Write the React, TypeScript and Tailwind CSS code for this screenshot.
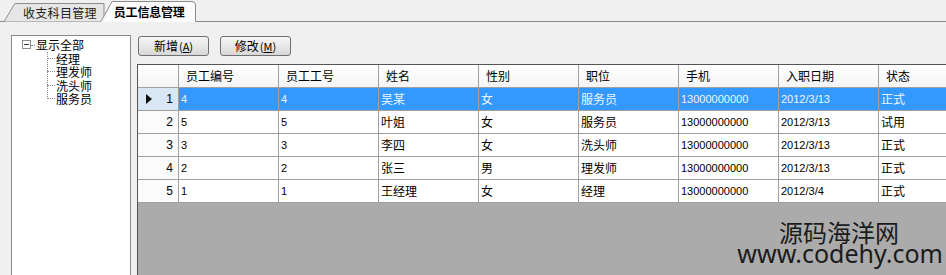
import React from "react";

const cjk = "font-['SimSun','Noto_Sans_CJK_SC',sans-serif]";

const cols = ["员工编号", "员工工号", "姓名", "性别", "职位", "手机", "入职日期", "状态"];
const rows = [
  ["4", "4", "吴某", "女", "服务员", "13000000000", "2012/3/13", "正式"],
  ["5", "5", "叶姐", "女", "服务员", "13000000000", "2012/3/13", "试用"],
  ["3", "3", "李四", "女", "洗头师", "13000000000", "2012/3/13", "正式"],
  ["2", "2", "张三", "男", "理发师", "13000000000", "2012/3/13", "正式"],
  ["1", "1", "王经理", "女", "经理", "13000000000", "2012/3/4", "正式"],
];
const isNum = (i: number) => i === 0 || i === 1 || i === 5 || i === 6;

function Tabs() {
  return (
    <div className="relative h-[22px] w-full">
      <svg className="absolute inset-0" width="946" height="22">
        <line x1="0" y1="21.5" x2="946" y2="21.5" stroke="#8c8c8c" />
        <path d="M4 21.5 L15 3.5 L104 3.5 L104 21.5" fill="#e6e6e6" stroke="#8c8c8c" />
        <path d="M101 21.5 L112 1.5 L192 1.5 Q195.5 1.5 195.5 5 L195.5 21.5" fill="#fbfbfb" stroke="#8c8c8c" />
        <line x1="101.5" y1="21.5" x2="195" y2="21.5" stroke="#fbfbfb" />
      </svg>
      <div className={`relative flex items-center h-[22px] text-[12px] leading-none ${cjk}`}>
        <span className="ml-[23px] pt-[3px] text-[#222] tracking-[0.3px]">收支科目管理</span>
        <span className="ml-[17px] pt-[1px] text-black font-bold tracking-[-0.2px]">员工信息管理</span>
      </div>
    </div>
  );
}

function Tree() {
  const kids = ["经理", "理发师", "洗头师", "服务员"];
  return (
    <div className="ml-[11px] mt-[13px] w-[120px] h-[260px] bg-white border border-[#8a8a8a] relative">
      <div className={`pt-[2px] text-[12px] text-black ${cjk}`}>
        <div className="flex items-center h-[13.5px]">
          <span className="ml-[10px] w-[9px] h-[9px] border border-[#8e8e8e] flex items-center justify-center bg-white">
            <span className="block w-[5px] h-[1px] bg-[#333]" />
          </span>
          <span className="w-[4px] border-t border-dotted border-[#888] mt-[1px]" />
          <span className="ml-[1px] inline-block h-[13px] leading-[13px]">显示全部</span>
        </div>
        <div className="relative">
          {kids.map((k) => (
            <div key={k} className="flex items-center h-[13.5px]">
              <span className="ml-[35px] w-[8px] border-t border-dotted border-[#888]" />
              <span className="ml-[1px] inline-block h-[13px] leading-[13px]">{k}</span>
            </div>
          ))}
          <span className="absolute left-[35px] top-0 h-[47px] border-l border-dotted border-[#888]" />
        </div>
      </div>
    </div>
  );
}

function Btn({ label, k }: { label: string; k: string }) {
  return (
    <button className={`w-[71px] h-[20px] rounded-[3px] border border-[#707070] bg-gradient-to-b from-[#f6f6f6] via-[#e8e8e8] to-[#d8d8d8] text-[12px] leading-none text-black flex items-center justify-center ${cjk}`}>
      {label}
      <span className="text-[11px] ml-[1px]">(<span className="underline">{k}</span>)</span>
    </button>
  );
}

function Grid() {
  return (
    <div className="mt-[8px] h-[220px] border-l border-t border-[#555] bg-[#ababab] overflow-hidden">
      <div className="flex h-[23px] bg-gradient-to-b from-white to-[#f4f4f4] border-b border-[#a0a0a0]">
        <div className="w-[41px] shrink-0 border-r border-[#a0a0a0]" />
        {cols.map((c) => (
          <div key={c} className={`w-[100px] shrink-0 border-r border-[#a0a0a0] pl-[7px] flex items-center text-[12px] text-black ${cjk}`}>
            {c}
          </div>
        ))}
      </div>
      {rows.map((r, ri) => {
        const sel = ri === 0;
        return (
          <div key={ri} className="flex h-[23px] border-b border-[#a0a0a0]">
            <div className={`w-[41px] shrink-0 border-r border-[#a0a0a0] flex items-center pr-[5px] ${sel ? "bg-[#d9e6f3]" : "bg-[#fbfbfb]"}`}>
              {sel ? (
                <svg width="6" height="10" className="ml-[8px]" viewBox="0 0 6 10">
                  <path d="M0 0 L6 5 L0 10 Z" fill="#111" />
                </svg>
              ) : null}
              <span className="ml-auto text-[12px] font-['Liberation_Sans',sans-serif] text-black">{ri + 1}</span>
            </div>
            {r.map((v, ci) => (
              <div
                key={ci}
                className={`w-[100px] shrink-0 border-r border-[#a0a0a0] pl-[2px] flex items-center ${sel ? "bg-[#3399ff] text-[#eef6ff]" : "bg-white text-black"} ${isNum(ci) ? "text-[11px] font-['Liberation_Sans',sans-serif]" : `text-[12px] ${cjk}`}`}
              >
                {v}
              </div>
            ))}
          </div>
        );
      })}
    </div>
  );
}

export default function App() {
  return (
    <div className="w-[946px] h-[275px] bg-[#f0f0f0] overflow-hidden relative">
      <Tabs />
      <div className="flex">
        <Tree />
        <div className="ml-[6px] flex-1 flex flex-col min-w-0">
          <div className="mt-[14px] flex gap-[11px] ml-[1px]">
            <Btn label="新增" k="A" />
            <Btn label="修改" k="M" />
          </div>
          <Grid />
        </div>
      </div>
      <div className="absolute right-[3px] top-[221px] flex flex-col items-end text-[#1b1b1b] font-['Noto_Sans','Open_Sans',sans-serif]">
        <span className="block h-[22px] text-[24px] leading-[22px] mr-[44px] font-['Noto_Sans_CJK_SC',sans-serif]">源码海洋网</span>
        <span className="block h-[20px] text-[25px] leading-[20px]">www.codehy.com</span>
      </div>
    </div>
  );
}
